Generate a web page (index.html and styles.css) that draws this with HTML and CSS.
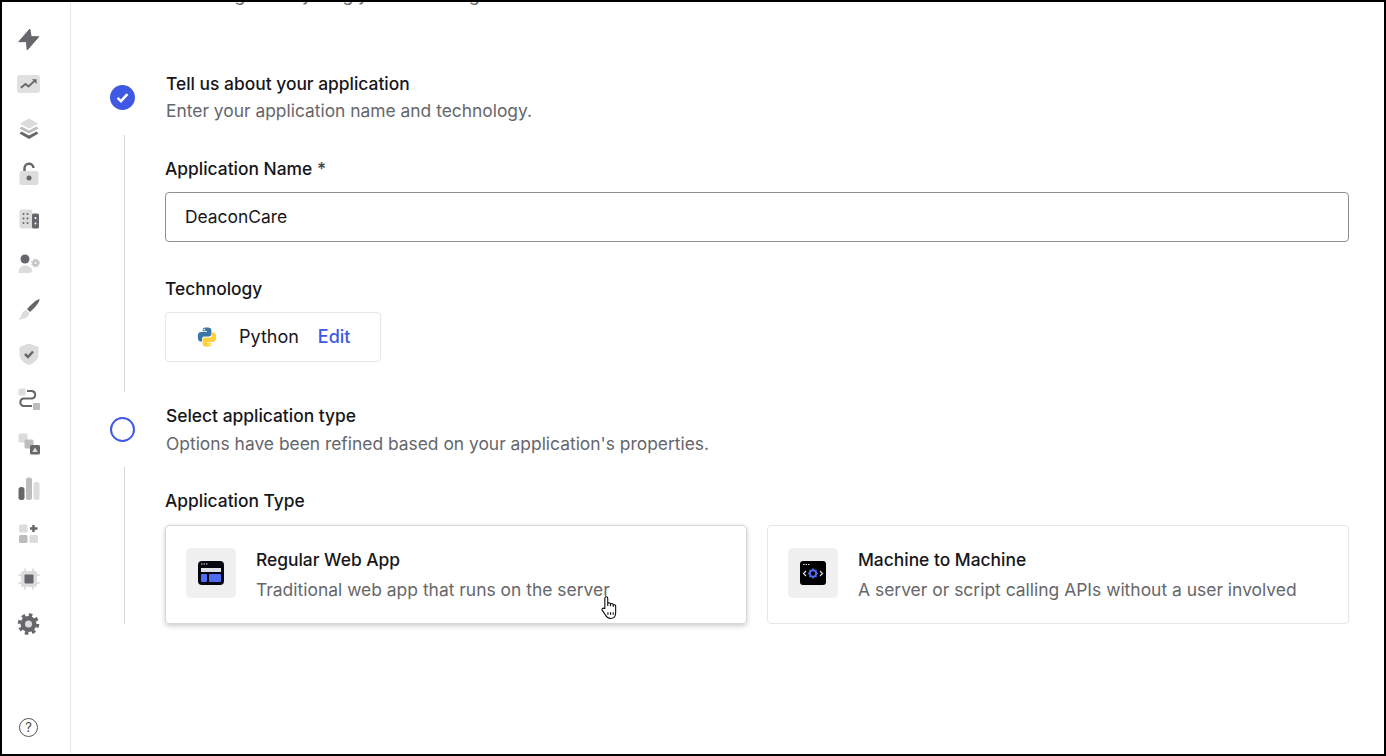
FILE: index.html
```html
<!DOCTYPE html>
<html lang="en">
<head>
    <meta charset="UTF-8">
    <meta name="viewport" content="width=device-width, initial-scale=1.0">
    <title>Create application</title>
    <link rel="stylesheet" href="styles.css">
</head>
<body>
<div class="frame">
    <nav class="sidebar">
        <div class="nav-items">
            <svg class="nav-icon" viewBox="0 0 24 24"><path class="dark rounded" d="M12.800 2 1.800 14.700h7.700l.7 8.300L21.800 9.700h-7.600z"/></svg>
            <span class="nav-active"><svg class="nav-icon" viewBox="0 0 24 18"><path class="line" d="M4 13l5-4 3 2.500 6-5.500"/><path class="dark" d="M15.500 4h5v5z"/></svg></span>
            <svg class="nav-icon" viewBox="0 0 24 24"><path class="light" d="M12 1.500l9.500 5-9.500 5-9.500-5z"/><path class="mid" d="M4.500 9.500l7.500 4 7.500-4 2 2-9.500 5-9.500-5z"/><path class="dark" d="M4.500 14.500l7.500 4 7.500-4 2 2-9.500 5.500-9.500-5.500z"/></svg>
            <svg class="nav-icon" viewBox="0 0 24 24"><path class="line thick" d="M7.500 9V6.500a4.500 4.500 0 0 1 9-.5"/><rect class="light" x="2.500" y="9" width="19" height="14" rx="2"/><circle class="dark" cx="12" cy="16" r="2.500"/></svg>
            <svg class="nav-icon" viewBox="0 0 24 24"><rect class="light" x="2.500" y="2.500" width="13" height="19" rx="2"/><rect class="dark" x="15" y="6.500" width="7" height="15" rx="1.500"/><path class="dots" d="M6.500 7h.01M10.500 7h.01M6.500 11.500h.01M10.500 11.500h.01M6.500 16h.01M10.500 16h.01"/><path class="holes" d="M18.500 11h.01M18.500 16.500h.01"/></svg>
            <svg class="nav-icon" viewBox="0 0 24 24"><circle class="dark" cx="8" cy="7" r="4.500"/><path class="light" d="M1.500 21c0-5 3-7.500 6.500-7.500 4 0 7 2.500 7 5 0 1.500-1 2.500-2.500 2.500z"/><circle class="gear" cx="18.500" cy="11" r="2.200"/><circle class="gear-teeth" cx="18.500" cy="11" r="3.800"/></svg>
            <svg class="nav-icon" viewBox="0 0 24 24"><path class="dark" d="M22.500 2c.5 3-5 9-9.500 13L10 12C14 8 19 2.500 22.500 2z"/><path class="light" d="M9.500 13l3 3c-1 4-5 6.500-11 6.500 2-1.500 2.500-3 3-5 .5-2 3-4.500 5-4.500z"/></svg>
            <svg class="nav-icon" viewBox="0 0 24 24"><path class="light" d="M12 1.500l9.500 3.500v7c0 5-4 9-9.500 11C6.500 21 2.500 17 2.500 12V5z"/><path class="line thick" d="M8 12l3 3 5-5.500"/></svg>
            <svg class="nav-icon" viewBox="0 0 24 24"><rect class="light" x="1.500" y="1.500" width="7" height="7" rx="1"/><rect class="mid" x="16" y="16" width="7" height="7" rx="1"/><path class="line" d="M10 4h5a3.800 3.800 0 0 1 0 7.500H6.500a3.800 3.800 0 0 0 0 7.500H15"/></svg>
            <svg class="nav-icon" viewBox="0 0 24 24"><rect class="light" x="1.500" y="1.500" width="9" height="9" rx="1.500"/><rect class="mid" x="7.500" y="7.500" width="9" height="9" rx="1.500"/><rect class="dark" x="13" y="13" width="10" height="9.500" rx="1.500"/><path class="tri" d="M18 15.500l2.800 4.500h-5.600z"/></svg>
            <svg class="nav-icon" viewBox="0 0 24 24"><rect class="dark" x="1.500" y="10" width="6" height="13" rx="2.500"/><rect class="mid" x="9" y="0.500" width="6" height="22.500" rx="2.500"/><rect class="light" x="16.500" y="5" width="6" height="18" rx="2.500"/></svg>
            <svg class="nav-icon" viewBox="0 0 24 24"><rect class="light" x="2" y="2.500" width="8.500" height="8" rx="1.500"/><rect class="mid" x="2" y="13" width="8.500" height="8" rx="1.500"/><rect class="light" x="12.500" y="13" width="8.500" height="8" rx="1.500"/><path class="line thick" d="M16.500 3v7M13 6.500h7.500"/></svg>
            <svg class="nav-icon" viewBox="0 0 24 24"><path class="pins" d="M8 1.500v21M16 1.500v21M1.500 8h21M1.500 16h21"/><rect class="light" x="4" y="4" width="16" height="16" rx="2"/><rect class="dark" x="7.500" y="7.500" width="9" height="9" rx="1"/></svg>
            <svg class="nav-icon" viewBox="0 0 24 24"><circle class="dark" cx="11.500" cy="12" r="8"/><circle class="gear-ring" cx="11.500" cy="12" r="9"/><circle class="light" cx="11.500" cy="12" r="3.500"/></svg>
        </div>
        <span class="help">?</span>
    </nav>

    <main class="content">
        <p class="clipped">Integrate anything you're building</p>

        <section class="step-head first">
            <span class="marker done"><svg viewBox="0 0 12 12"><path d="M2.500 6.300l2.400 2.300 4.600-5"/></svg></span>
            <div class="step-text">
                <h2>Tell us about your application</h2>
                <p>Enter your application name and technology.</p>
            </div>
        </section>
        <div class="step-body tall">
            <label class="field-label">Application Name <span class="req">*</span></label>
            <input class="text-input" type="text" value="DeaconCare">
            <label class="field-label tech-label">Technology</label>
            <div class="tech-box">
                <svg class="python" viewBox="0 0 24 24">
                    <path fill="#3a75a8" d="M11.800 1.500c-4.600 0-4.400 2-4.400 2v2.300h4.700v.7H5.300S2 6.100 2 11.600c0 5.400 2.900 5.200 2.900 5.200h1.700v-2.500s-.1-2.900 2.800-2.900h4.700s2.700 0 2.700-2.600V4.300s.4-2.800-5-2.800z"/>
                    <path fill="#fdd13d" d="M12.200 22.500c4.600 0 4.400-2 4.400-2v-2.300h-4.700v-.7h6.800s3.300.4 3.300-5.100c0-5.400-2.900-5.200-2.900-5.200h-1.700v2.500s.1 2.900-2.800 2.900H9.900s-2.700 0-2.700 2.600v4.500s-.4 2.800 5 2.800z"/>
                    <circle cx="9.200" cy="4" r=".9" fill="#fff"/><circle cx="14.800" cy="20" r=".9" fill="#fff"/>
                </svg>
                <span class="tech-name">Python</span>
                <a class="edit-link">Edit</a>
            </div>
        </div>

        <section class="step-head lower">
            <span class="marker"></span>
            <div class="step-text">
                <h2>Select application type</h2>
                <p>Options have been refined based on your application's properties.</p>
            </div>
        </section>
        <div class="step-body">
            <label class="field-label type-label">Application Type</label>
            <div class="type-grid">
                <div class="type-card hovered">
                    <span class="tile">
                        <svg viewBox="0 0 26 24">
                            <rect width="26" height="24" rx="4" fill="#05060f"/>
                            <path d="M3 3h1.500M5.500 3H7M8 3h1.500" stroke="#ddd" stroke-width="1"/>
                            <rect x="3" y="7" width="20" height="4" fill="#dfe1ea"/>
                            <rect x="3" y="13" width="6" height="8" rx="1" fill="#4f6cf5"/>
                            <rect x="11" y="13" width="12" height="8" rx="1" fill="#4f6cf5"/>
                        </svg>
                    </span>
                    <div class="type-text">
                        <h3>Regular Web App</h3>
                        <p>Traditional web app that runs on the server</p>
                    </div>
                </div>
                <div class="type-card">
                    <span class="tile">
                        <svg viewBox="0 0 26 24">
                            <rect width="26" height="24" rx="3" fill="#000"/>
                            <path d="M3 3.500h1.500M5.500 3.500H7M8 3.500h1.500" stroke="#ddd" stroke-width="1"/>
                            <path d="M6 10l-2.500 2.500L6 15M20 10l2.500 2.500L20 15" fill="none" stroke="#ddd" stroke-width="1.200"/>
                            <circle cx="13" cy="12.500" r="3.200" fill="none" stroke="#4f6cf5" stroke-width="2"/>
                            <path d="M13 7.500v2M13 15.500v2M8 12.500h2M16 12.500h2M9.500 9l1.400 1.400M15.100 14.600l1.400 1.400M16.500 9l-1.400 1.400M10.900 14.600 9.500 16" stroke="#4f6cf5" stroke-width="1.500"/>
                        </svg>
                    </span>
                    <div class="type-text">
                        <h3>Machine to Machine</h3>
                        <p>A server or script calling APIs without a user involved</p>
                    </div>
                </div>
            </div>
            <svg class="cursor" viewBox="0 0 18 24"><path d="M5 13V3a1.400 1.400 0 0 1 2.800 0v7.500-1.700a1.300 1.300 0 0 1 2.600 0v2-1.300a1.300 1.300 0 0 1 2.600 0v1.800-.8a1.200 1.200 0 0 1 2.400 0V17c0 3.500-2 5.500-5 5.500-2.500 0-3.500-1-5-3.500l-3-4.500c-.8-1.400 1-2.500 2-1.500z"/><path d="M8 16.500v2.500M10.500 16.500v2.500M13 16.500v2.500"/></svg>
        </div>
    </main>
</div>
</body>
</html>
```

FILE: styles.css
```css
* {
    box-sizing: border-box;
}
html, body {
    margin: 0;
    height: 100%;
    overflow: hidden;
}
body {
    font-family: Inter, "Liberation Sans", sans-serif;
    font-size: 17.4px;
    background: #fff;
    color: #16161a;
}
h2, h3, p {
    margin: 0;
    font-weight: 400;
}
.frame {
    display: flex;
    height: 756px;
    border: 2px solid #000;
    overflow: hidden;
}

/* left rail */
.sidebar {
    width: 69px;
    flex: none;
    border-right: 1px solid #e6e6e6;
    display: flex;
    flex-direction: column;
    align-items: center;
    padding: 25px 15px 17px 0;
}
.nav-items {
    display: flex;
    flex-direction: column;
    align-items: center;
    gap: 21px;
    flex: 1;
}
.nav-icon {
    display: block;
    width: 24px;
    height: 24px;
}
.nav-active {
    display: block;
    width: 23px;
    height: 18px;
    margin: 3px 0;
    background: #e0e0e0;
    border-radius: 3px;
}
.nav-active .nav-icon {
    width: 23px;
    height: 18px;
}
.dark { fill: #65676b; }
.mid { fill: #bdbdbd; }
.light { fill: #dcdcdc; }
.rounded {
    stroke: #65676b;
    stroke-width: 1;
    stroke-linejoin: round;
}
.gear { fill: none; stroke: #c4c4c4; stroke-width: 2.400; }
.gear-teeth { fill: none; stroke: #c4c4c4; stroke-width: 1.200; stroke-dasharray: 1.500 1.500; }
.gear-ring {
    fill: none;
    stroke: #65676b;
    stroke-width: 3.500;
    stroke-dasharray: 3.500 3.570;
}
.tri { fill: #dcdcdc; }
.line {
    fill: none;
    stroke: #65676b;
    stroke-width: 2;
}
.line.thick { stroke-width: 2.500; }
.dots, .holes {
    fill: none;
    stroke-linecap: round;
    stroke-width: 2;
}
.dots { stroke: #65676b; }
.holes { stroke: #fff; }
.pins {
    fill: none;
    stroke: #e0e0e0;
    stroke-width: 2;
}
.help {
    width: 19px;
    height: 19px;
    border: 1.500px solid #555;
    border-radius: 50%;
    font-size: 13px;
    line-height: 16px;
    text-align: center;
    color: #444;
}

/* main column */
.content {
    flex: 1;
    position: relative;
    padding: 0 35px 0 39px;
    min-width: 0;
    overflow: hidden;
}
.clipped {
    margin: -19px 0 0 94px;
    line-height: 24px;
    white-space: nowrap;
    color: #65676b;
}
.step-head {
    display: flex;
    align-items: center;
    gap: 31px;
    height: 56px;
}
.step-head.first {
    margin-top: 62px;
}
.step-text {
    padding-top: 2px;
}
.step-head h2 {
    font-size: inherit;
    line-height: 26px;
    font-weight: 500;
    color: #16161a;
}
.step-head p {
    line-height: 28px;
    color: #65676b;
}
.step-head.lower .step-text {
    padding-top: 3px;
}
.step-head.lower p {
    margin-top: 1px;
}
.marker {
    width: 25px;
    height: 25px;
    flex: none;
    border-radius: 50%;
    border: 2px solid #3f59e4;
}
.marker.done {
    background: #3f59e4;
    padding: 2px;
}
.marker svg {
    display: block;
    width: 17px;
    height: 17px;
    fill: none;
    stroke: #fff;
    stroke-width: 1.800;
}
.step-body {
    position: relative;
    margin: 10px 0 0 14px;
    padding: 21px 0 0 40px;
    border-left: 1px solid #d6d6d6;
}
.step-body.tall {
    height: 257px;
    margin-bottom: 9px;
}
.field-label {
    display: block;
    line-height: 26px;
    font-weight: 500;
    margin-bottom: 10px;
}
.field-label.type-label {
    margin-bottom: 11px;
}
.req {
    color: #444;
}
.text-input {
    display: block;
    width: 100%;
    height: 50px;
    padding: 0 19px 2px;
    border: 1px solid #8f9095;
    border-radius: 4px;
    font: 17.4px Inter, "Liberation Sans", sans-serif;
    color: #16161a;
}
.tech-label {
    margin-top: 34px;
}
.tech-box {
    display: flex;
    align-items: center;
    width: 216px;
    height: 50px;
    padding: 0 0 1px 30px;
    border: 1px solid #e6e6e6;
    border-radius: 4px;
    font-size: 18px;
}
.python {
    width: 22px;
    height: 22px;
    margin-right: 21px;
}
.edit-link {
    margin-left: 19px;
    font-weight: 500;
    color: #3f59e4;
}
.type-grid {
    display: grid;
    grid-template-columns: 1fr 1fr;
    gap: 20px;
}
.type-card {
    display: flex;
    align-items: center;
    gap: 20px;
    height: 99px;
    padding: 0 0 3px 20px;
    border: 1px solid #e6e6e6;
    border-radius: 4px;
}
.type-card.hovered {
    border-color: #d6d6d6;
    box-shadow: 0 2px 5px rgba(0, 0, 0, 0.2);
}
.type-text {
    padding-top: 3px;
}
.type-card h3 {
    font-size: inherit;
    line-height: 26px;
    font-weight: 500;
    margin-bottom: 4px;
}
.type-card p {
    font-size: 17.45px;
    line-height: 26px;
    color: #65676b;
}
.tile {
    display: flex;
    align-items: center;
    justify-content: center;
    width: 50px;
    height: 50px;
    flex: none;
    background: #f0f0f0;
    border-radius: 5px;
}
.tile svg {
    width: 26px;
    height: 24px;
}
.cursor {
    position: absolute;
    left: 474px;
    top: 128px;
    width: 20px;
    height: 25px;
    fill: #fff;
    stroke: #000;
    stroke-width: 1;
}
```
